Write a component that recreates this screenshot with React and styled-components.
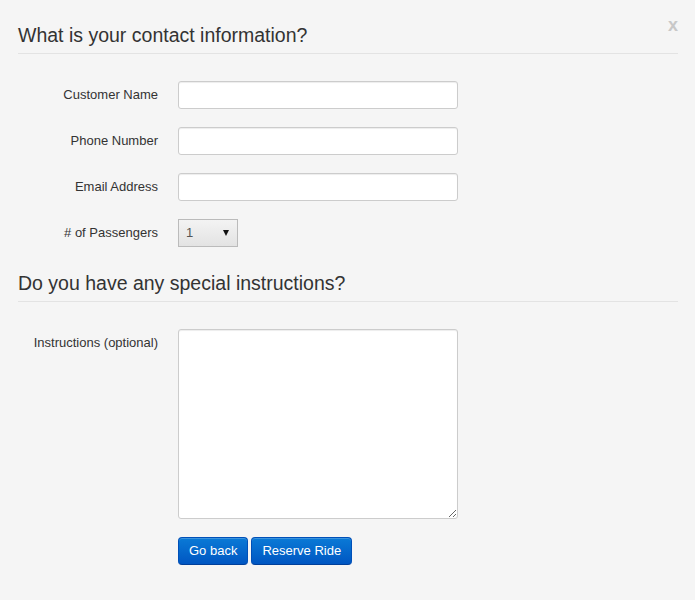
import styled, { createGlobalStyle } from "styled-components";

const GlobalStyle = createGlobalStyle`
  html, body {
    margin: 0;
    padding: 0;
    background: #f5f5f5;
    font-family: "Liberation Sans", Arial, sans-serif;
    font-size: 13px;
    line-height: 18px;
    color: #333;
  }
`;

function App() {
  return (
    <>
      <GlobalStyle />
      <Modal>
        <Close>x</Close>
        <form>
          <Legend>What is your contact information?</Legend>
          <Group>
            <Label>Customer Name</Label>
            <Input type="text" />
          </Group>
          <Group>
            <Label>Phone Number</Label>
            <Input type="text" />
          </Group>
          <Group>
            <Label>Email Address</Label>
            <Input type="text" />
          </Group>
          <Group>
            <Label># of Passengers</Label>
            <Select>
              <span>1</span>
              <Caret />
            </Select>
          </Group>

          <Legend>Do you have any special instructions?</Legend>
          <Group>
            <Label>Instructions (optional)</Label>
            <TextArea />
          </Group>
          <Actions>
            <Button type="button">Go back</Button>
            <Button type="button">Reserve Ride</Button>
          </Actions>
        </form>
      </Modal>
    </>
  );
}

export default App;

const Modal = styled.div`
  position: relative;
  padding: 17px 17px 35px 18px;
`;

const Close = styled.span`
  position: absolute;
  top: 15px;
  right: 17px;
  font-size: 18px;
  font-weight: bold;
  line-height: 20px;
  color: #c8c8c8;
`;

const Legend = styled.div`
  font-size: 19.5px;
  line-height: 36px;
  color: #333;
  border-bottom: 1px solid #e3e3e3;
  margin-bottom: 27px;
`;

const Group = styled.div`
  display: flex;
  align-items: flex-start;
  margin-bottom: 18px;
`;

const Label = styled.label`
  width: 140px;
  text-align: right;
  padding-top: 5px;
  margin-right: 20px;
  font-size: 13px;
  line-height: 18px;
  color: #333;
`;

const Input = styled.input`
  box-sizing: border-box;
  width: 280px;
  height: 28px;
  padding: 4px;
  border: 1px solid #ccc;
  border-radius: 3px;
  background: #fff;
  box-shadow: inset 0 1px 1px rgba(0, 0, 0, 0.075);
  font-family: inherit;
  font-size: 13px;
  outline: none;
`;

const Select = styled.div`
  box-sizing: border-box;
  width: 60px;
  height: 28px;
  display: flex;
  align-items: center;
  justify-content: space-between;
  padding: 0 8px 0 7px;
  border: 1px solid #bbb;
  background: linear-gradient(#f3f3f3, #e3e3e3);
  font-size: 13px;
  color: #555;
`;

const Caret = styled.span`
  width: 0;
  height: 0;
  border-left: 3px solid transparent;
  border-right: 3px solid transparent;
  border-top: 6px solid #111;
`;

const TextArea = styled.textarea`
  box-sizing: border-box;
  width: 280px;
  height: 190px;
  padding: 4px;
  border: 1px solid #ccc;
  border-radius: 3px;
  background: #fff;
  box-shadow: inset 0 1px 1px rgba(0, 0, 0, 0.075);
  font-family: inherit;
  font-size: 13px;
  outline: none;
`;

const Actions = styled.div`
  display: flex;
  gap: 3px;
  padding-left: 160px;
`;

const Button = styled.button`
  box-sizing: border-box;
  height: 28px;
  padding: 4px 10px;
  font-family: "Liberation Sans", Arial, sans-serif;
  font-size: 13px;
  line-height: 18px;
  color: #fff;
  background: linear-gradient(#0a7ad6, #0056c2);
  border: 1px solid #0050b8;
  border-bottom-color: #003f9a;
  border-radius: 4px;
  box-shadow: inset 0 1px 0 rgba(255, 255, 255, 0.2);
  cursor: pointer;
`;
